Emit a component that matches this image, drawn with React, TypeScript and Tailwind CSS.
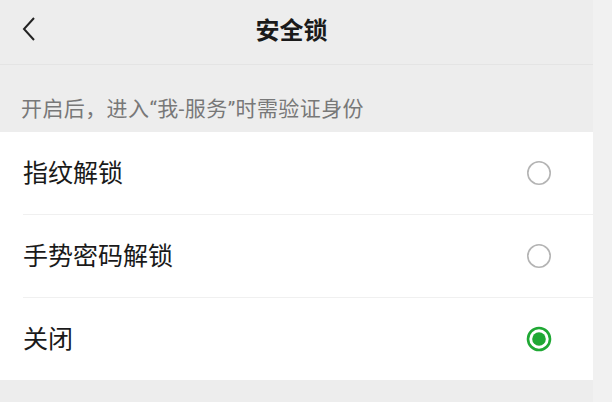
import React, { useState } from 'react';

type Option = {
    id: string;
    label: string;
};

const options: Option[] = [
    { id: 'fingerprint', label: '指纹解锁' },
    { id: 'gesture', label: '手势密码解锁' },
    { id: 'off', label: '关闭' },
];

const Radio: React.FC<{ checked: boolean }> = ({ checked }) => (
    <svg width="26" height="26" viewBox="0 0 26 26">
        {checked ? (
            <>
                <circle cx="13" cy="13" r="11" fill="none" stroke="#1fa834" strokeWidth="2.6" />
                <circle cx="13" cy="13" r="6.8" fill="#1fa834" />
            </>
        ) : (
            <circle cx="13" cy="13" r="11.2" fill="none" stroke="#b4b4b4" strokeWidth="1.6" />
        )}
    </svg>
);

const App: React.FC = () => {
    const [selected, setSelected] = useState('off');

    return (
        <div
            className="flex w-[612px] h-[402px] overflow-hidden"
            style={{ fontFamily: '"Noto Sans CJK SC", "Noto Sans", sans-serif' }}
        >
            <div className="w-[593px] flex flex-col bg-[#ededed]">
                {/* header */}
                <div className="relative h-[65px] flex items-center justify-center border-b border-[#e4e4e4]">
                    <button className="absolute left-[14px] top-[14px] w-[28px] h-[30px] flex items-center justify-center">
                        <svg width="18" height="28" viewBox="0 0 18 28">
                            <path d="M15 3 L5 14 L15 25" fill="none" stroke="#222" strokeWidth="2" strokeLinejoin="miter" />
                        </svg>
                    </button>
                    <h1 className="text-[24px] leading-[30px] font-semibold text-[#1a1a1a] -mt-[6px] mr-[10px]">安全锁</h1>
                </div>

                <div className="h-[67px] flex items-end pl-[21px] pb-[9px]">
                    <p
                        className="text-[21px] leading-[28px] tracking-[0.4px] text-[#787878]"
                        style={{ fontFamily: 'Roboto, "Noto Sans CJK SC", sans-serif' }}
                    >
                        开启后，进入“我-服务”时需验证身份
                    </p>
                </div>

                <div className="bg-white">
                    {options.map((opt, i) => (
                        <div key={opt.id} className="pl-[23px]" onClick={() => setSelected(opt.id)}>
                            <div
                                className={`flex items-center justify-between pr-[41px] ${
                                    i > 0 ? 'h-[83px] border-t border-[#f0f0f0]' : 'h-[82px]'
                                }`}
                            >
                                <span className="text-[25px] leading-[32px] text-[#1a1a1a] -mt-[5px]">{opt.label}</span>
                                <Radio checked={selected === opt.id} />
                            </div>
                        </div>
                    ))}
                </div>
            </div>
            <div className="flex-1 bg-[#f1f1f1]" />
        </div>
    );
};

export default App;
